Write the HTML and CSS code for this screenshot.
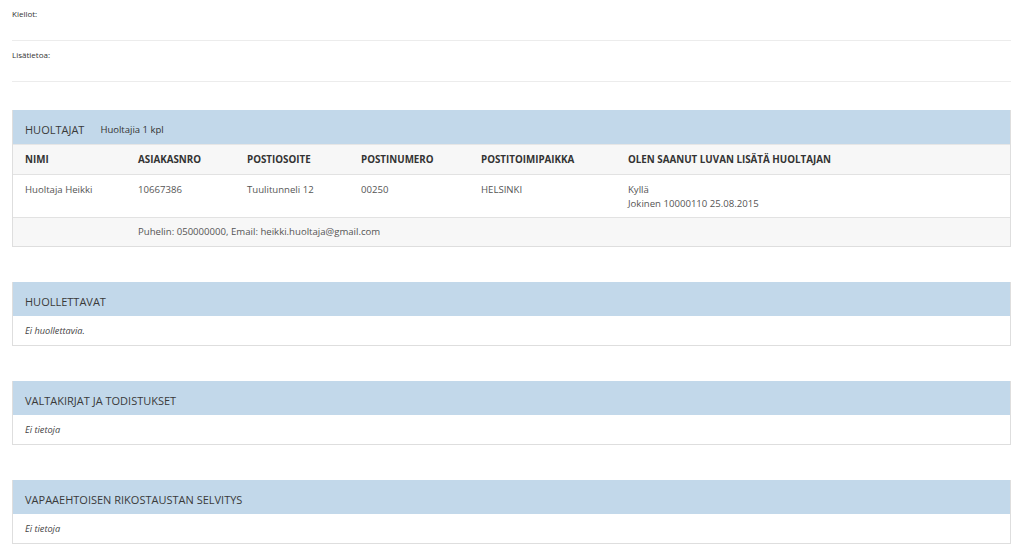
FILE: index.html
```html
<!DOCTYPE html>
<html lang="fi">
<head>
<meta charset="utf-8">
<title>Huoltajat</title>
<link rel="stylesheet" href="styles.css">
</head>
<body>
<div class="page">
  <div class="field">Kiellot:</div>
  <div class="field">Lisätietoa:</div>

  <section class="panel first">
    <div class="panel-head"><span class="title">HUOLTAJAT</span><span class="sub">Huoltajia 1 kpl</span></div>
    <table class="grid">
      <colgroup>
        <col class="c1"><col class="c2"><col class="c3"><col class="c4"><col class="c5"><col class="c6">
      </colgroup>
      <thead>
        <tr>
          <th>NIMI</th><th>ASIAKASNRO</th><th>POSTIOSOITE</th><th>POSTINUMERO</th><th>POSTITOIMIPAIKKA</th><th>OLEN SAANUT LUVAN LISÄTÄ HUOLTAJAN</th>
        </tr>
      </thead>
      <tbody>
        <tr class="data">
          <td>Huoltaja Heikki</td><td>10667386</td><td>Tuulitunneli 12</td><td>00250</td><td>HELSINKI</td><td>Kyllä<br>Jokinen 10000110 25.08.2015</td>
        </tr>
        <tr class="contact">
          <td></td><td colspan="5">Puhelin: 050000000, Email: heikki.huoltaja@gmail.com</td>
        </tr>
      </tbody>
    </table>
  </section>

  <section class="panel">
    <div class="panel-head"><span class="title">HUOLLETTAVAT</span></div>
    <div class="panel-body">Ei huollettavia.</div>
  </section>

  <section class="panel">
    <div class="panel-head"><span class="title">VALTAKIRJAT JA TODISTUKSET</span></div>
    <div class="panel-body">Ei tietoja</div>
  </section>

  <section class="panel">
    <div class="panel-head"><span class="title">VAPAAEHTOISEN RIKOSTAUSTAN SELVITYS</span></div>
    <div class="panel-body">Ei tietoja</div>
  </section>
</div>
</body>
</html>
```

FILE: styles.css
```css
html, body {
  margin: 0;
  padding: 0;
  background: #ffffff;
}
body {
  font-family: "Open Sans", "DejaVu Sans", sans-serif;
  color: #444;
}
.page {
  padding: 0 12px;
}
.field {
  font-size: 8px;
  line-height: 12px;
  padding: 8px 0 20px;
  border-bottom: 1px solid #ececec;
  color: #333;
}
.panel {
  border: 1px solid #dedede;
  border-top: none;
  margin-top: 35px;
}
.panel.first {
  margin-top: 28px;
}
.panel-head {
  background: #c2d8ea;
  height: 34px;
  display: flex;
  align-items: center;
  padding: 4px 12px 0;
  box-sizing: border-box;
}
.title {
  font-size: 11px;
  color: #3a3a3a;
}
.sub {
  font-size: 9.5px;
  color: #333;
  margin-left: 16px;
}
.grid {
  width: 100%;
  border-collapse: collapse;
  table-layout: fixed;
  font-size: 9.6px;
}
.c1 { width: 125px; }
.c2 { width: 109px; }
.c3 { width: 114px; }
.c4 { width: 120px; }
.c5 { width: 147px; }
.grid th {
  text-align: left;
  font-weight: 700;
  font-size: 9.8px;
  color: #333;
  background: #f7f7f7;
  height: 29px;
  padding: 0;
  border-top: 1px solid #e6e6e6;
  border-bottom: 1px solid #e2e2e2;
  vertical-align: middle;
}
.grid th:first-child, .grid td:first-child {
  padding-left: 12px;
}
.grid td {
  padding: 0;
  color: #555;
  line-height: 14px;
}
.data td {
  height: 41px;
  padding-top: 8px;
  padding-bottom: 6px;
  vertical-align: top;
  box-sizing: border-box;
  border-bottom: 1px solid #e2e2e2;
}
.contact td {
  background: #f7f7f7;
  height: 28px;
  vertical-align: middle;
}
.panel-body {
  font-size: 9.2px;
  font-style: italic;
  color: #444;
  height: 29px;
  display: flex;
  align-items: center;
  padding: 0 12px;
}
```
